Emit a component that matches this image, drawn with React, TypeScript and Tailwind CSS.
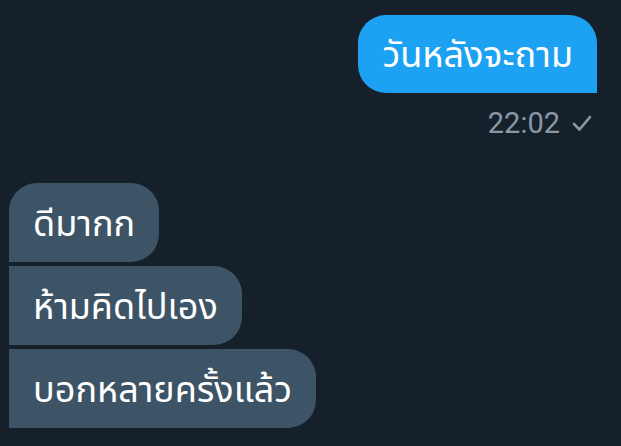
const Check = () => (
  <svg width="20" height="18" viewBox="0 0 20 18" fill="none">
    <path d="M2 10 L7.5 15.5 L18 3" stroke="#8899a6" strokeWidth="2.6" strokeLinecap="round" strokeLinejoin="round" />
  </svg>
);

const incoming = [
  { id: 1, text: "ดีมากก", shape: "rounded-[28px] rounded-bl-none" },
  { id: 2, text: "ห้ามคิดไปเอง", shape: "rounded-r-[28px]" },
  { id: 3, text: "บอกหลายครั้งแล้ว", shape: "rounded-r-[28px]" },
];

export default function App() {
  return (
    <div
      className="flex h-[446px] w-[621px] flex-col bg-[#15202b] pl-[9px] pr-[24px] pt-[15px]"
      style={{ fontFamily: '"Noto Sans", "Noto Sans Thai", Roboto, sans-serif' }}
    >
      <div className="flex flex-col items-end">
        <div className="rounded-[28px] rounded-br-none bg-[#1da1f2] px-[24px] py-[19px] text-[36px] leading-[40px] text-white">
          วันหลังจะถาม
        </div>
        <div className="mt-[12px] flex items-center gap-[12px] pr-[5px] text-[#8899a6]">
          <span className="text-[29px] leading-[36px]" style={{ fontFamily: "Roboto, sans-serif" }}>
            22:02
          </span>
          <Check />
        </div>
      </div>

      <div className="mt-[42px] flex flex-col items-start gap-[4px]">
        {incoming.map((m) => (
          <div
            key={m.id}
            className={`bg-[#3d5466] px-[24px] py-[19px] text-[36px] leading-[41px] text-white ${m.shape}`}
          >
            {m.text}
          </div>
        ))}
      </div>
    </div>
  );
}
